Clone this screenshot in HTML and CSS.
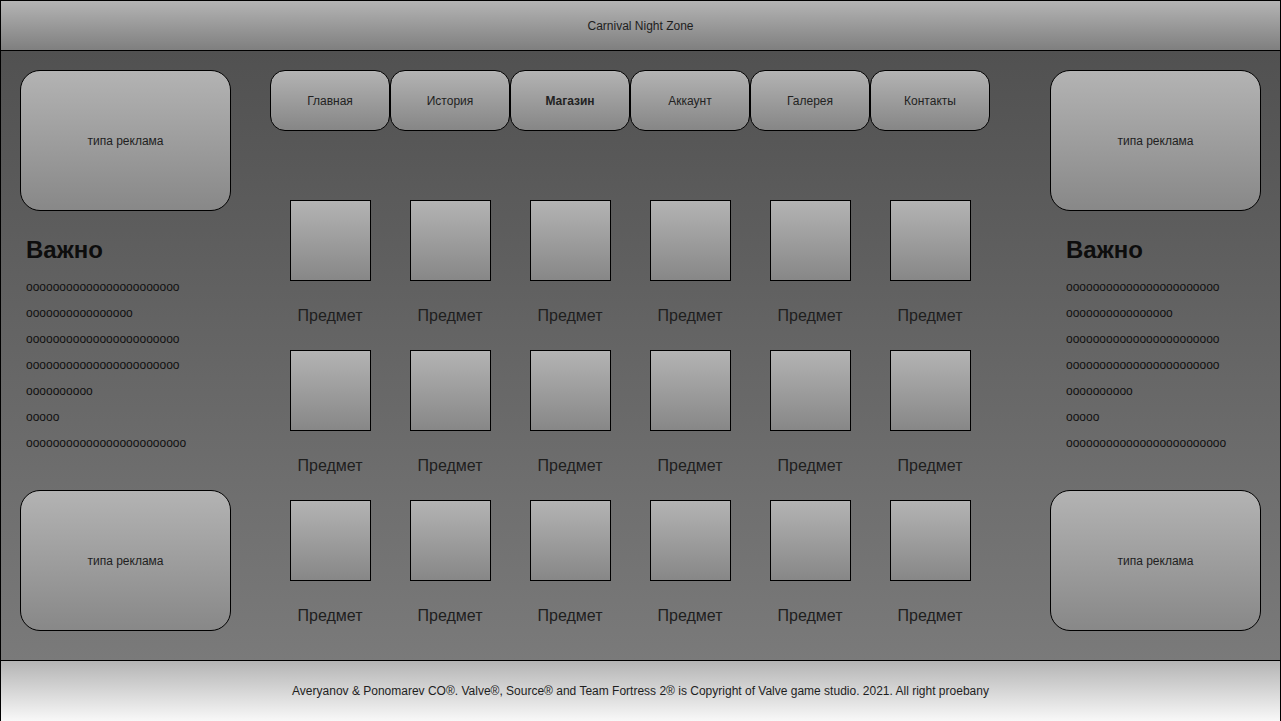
FILE: index.html
```html
<!DOCTYPE html>
<html lang="ru">
<head>
<meta charset="utf-8">
<title>Carnival Night Zone</title>
<link rel="stylesheet" href="styles.css">
</head>
<body>
<div class="page">
  <header class="header">Carnival Night Zone</header>
  <main class="main">
    <aside class="side side-left">
      <div class="ad">типа реклама</div>
      <h2 class="important">Важно</h2>
      <div class="notes">
        <p>ooooooooooooooooooooooo</p>
        <p>oooooooooooooooo</p>
        <p>ooooooooooooooooooooooo</p>
        <p>ooooooooooooooooooooooo</p>
        <p>oooooooooo</p>
        <p>ooooo</p>
        <p>oooooooooooooooooooooooo</p>
      </div>
      <div class="ad ad-bottom">типа реклама</div>
    </aside>
    <section class="center">
      <nav class="nav">
        <a class="nav-btn">Главная</a>
        <a class="nav-btn">История</a>
        <a class="nav-btn active">Магазин</a>
        <a class="nav-btn">Аккаунт</a>
        <a class="nav-btn">Галерея</a>
        <a class="nav-btn">Контакты</a>
      </nav>
      <div class="items">
        <div class="item"><div class="thumb"></div><span class="label">Предмет</span></div>
        <div class="item"><div class="thumb"></div><span class="label">Предмет</span></div>
        <div class="item"><div class="thumb"></div><span class="label">Предмет</span></div>
        <div class="item"><div class="thumb"></div><span class="label">Предмет</span></div>
        <div class="item"><div class="thumb"></div><span class="label">Предмет</span></div>
        <div class="item"><div class="thumb"></div><span class="label">Предмет</span></div>
        <div class="item"><div class="thumb"></div><span class="label">Предмет</span></div>
        <div class="item"><div class="thumb"></div><span class="label">Предмет</span></div>
        <div class="item"><div class="thumb"></div><span class="label">Предмет</span></div>
        <div class="item"><div class="thumb"></div><span class="label">Предмет</span></div>
        <div class="item"><div class="thumb"></div><span class="label">Предмет</span></div>
        <div class="item"><div class="thumb"></div><span class="label">Предмет</span></div>
        <div class="item"><div class="thumb"></div><span class="label">Предмет</span></div>
        <div class="item"><div class="thumb"></div><span class="label">Предмет</span></div>
        <div class="item"><div class="thumb"></div><span class="label">Предмет</span></div>
        <div class="item"><div class="thumb"></div><span class="label">Предмет</span></div>
        <div class="item"><div class="thumb"></div><span class="label">Предмет</span></div>
        <div class="item"><div class="thumb"></div><span class="label">Предмет</span></div>
      </div>
    </section>
    <aside class="side side-right">
      <div class="ad">типа реклама</div>
      <h2 class="important">Важно</h2>
      <div class="notes">
        <p>ooooooooooooooooooooooo</p>
        <p>oooooooooooooooo</p>
        <p>ooooooooooooooooooooooo</p>
        <p>ooooooooooooooooooooooo</p>
        <p>oooooooooo</p>
        <p>ooooo</p>
        <p>oooooooooooooooooooooooo</p>
      </div>
      <div class="ad ad-bottom">типа реклама</div>
    </aside>
  </main>
  <footer class="footer">Averyanov &amp; Ponomarev CO®. Valve®, Source® and Team Fortress 2® is Copyright of Valve game studio. 2021. All right proebany</footer>
</div>
</body>
</html>
```

FILE: styles.css
```css
* {
  box-sizing: border-box;
}

html, body {
  margin: 0;
  padding: 0;
}

body {
  font-family: "Liberation Sans", Arial, sans-serif;
  font-size: 12px;
  color: #1e1e1e;
  background: #ffffff;
}

.page {
  width: 1281px;
  height: 721px;
  border: 1px solid #000;
  display: flex;
  flex-direction: column;
}

.header {
  height: 50px;
  flex: none;
  border-bottom: 1px solid #000;
  background: linear-gradient(to bottom, #b4b4b4, #7f7f7f);
  display: flex;
  align-items: center;
  justify-content: center;
  color: #1e1e1e;
}

.main {
  height: 609px;
  flex: none;
  display: grid;
  grid-template-columns: 211px 720px 211px;
  column-gap: 39px;
  padding: 19px 19px 0 19px;
  background: linear-gradient(to bottom, #515151, #7a7a7a);
}

.main > .side-right {
  margin-left: 21px;
}

.side {
  display: flex;
  flex-direction: column;
  padding-bottom: 29px;
}

.ad {
  width: 211px;
  height: 141px;
  flex: none;
  border: 1px solid #000;
  border-radius: 20px;
  background: linear-gradient(to bottom, #b3b3b3, #888888);
  display: flex;
  align-items: center;
  justify-content: center;
  color: #1e1e1e;
}

.ad-bottom {
  margin-top: auto;
}

.important {
  margin: 25px 0 0;
  font-size: 24px;
  line-height: 28px;
  font-weight: bold;
  color: #0d0d0d;
}

.notes p {
  margin: 0;
  line-height: 26px;
  color: #111;
}

.notes {
  margin-top: 10px;
}

.side-left .important,
.side-left .notes {
  padding-left: 6px;
}

.side-right .important,
.side-right .notes {
  padding-left: 16px;
}

.center {
  display: flex;
  flex-direction: column;
}

.nav {
  display: flex;
}

.nav-btn {
  width: 120px;
  height: 61px;
  border: 1px solid #000;
  border-radius: 15px;
  background: linear-gradient(to bottom, #b3b3b3, #868686);
  display: flex;
  align-items: center;
  justify-content: center;
  color: #222;
  text-decoration: none;
}

.nav-btn.active {
  font-weight: bold;
}

.items {
  margin-top: 69px;
  display: grid;
  grid-template-columns: repeat(6, 120px);
  grid-auto-rows: 150px;
}

.item {
  display: flex;
  flex-direction: column;
  align-items: center;
}

.thumb {
  width: 81px;
  height: 81px;
  border: 1px solid #000;
  background: linear-gradient(to bottom, #b3b3b3, #878787);
}

.label {
  margin-top: 26px;
  font-size: 16px;
  line-height: 18px;
  color: #1e1e1e;
}

.footer {
  height: 61px;
  flex: none;
  border-top: 1px solid #000;
  background: linear-gradient(to bottom, #b4b4b4, #f8f8f8);
  display: flex;
  align-items: center;
  justify-content: center;
  color: #1e1e1e;
}
```
